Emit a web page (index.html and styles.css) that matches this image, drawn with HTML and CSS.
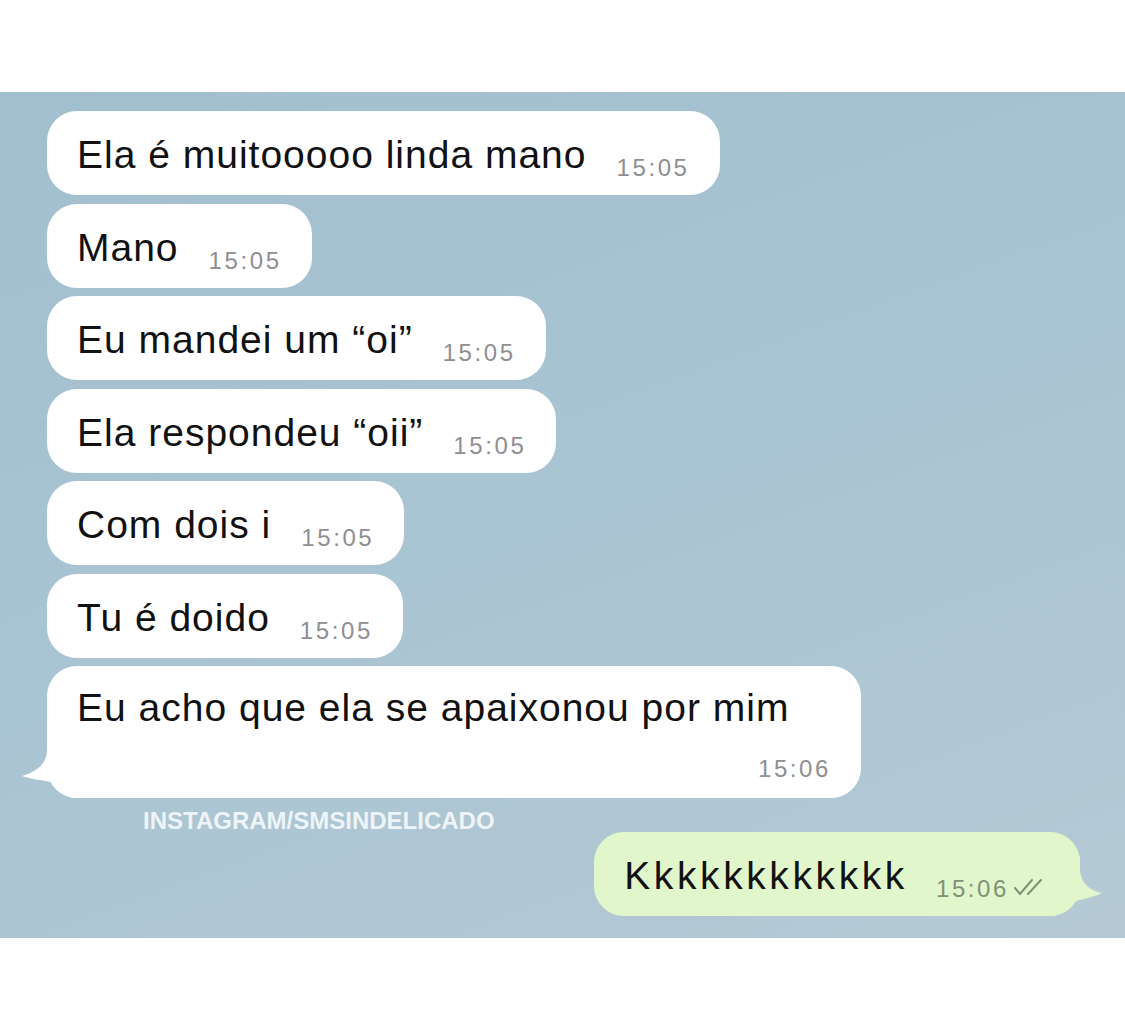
FILE: index.html
```html
<!DOCTYPE html>
<html lang="pt-BR">
<head>
    <meta charset="UTF-8">
    <title>Conversa</title>
    <link rel="stylesheet" href="styles.css">
</head>
<body>
<div class="chat">
    <div class="msg in"><span class="text">Ela é muitooooo linda mano</span><span class="time">15:05</span></div>
    <div class="msg in"><span class="text">Mano</span><span class="time">15:05</span></div>
    <div class="msg in"><span class="text">Eu mandei um “oi”</span><span class="time">15:05</span></div>
    <div class="msg in"><span class="text">Ela respondeu “oii”</span><span class="time">15:05</span></div>
    <div class="msg in"><span class="text">Com dois i</span><span class="time">15:05</span></div>
    <div class="msg in"><span class="text">Tu é doido</span><span class="time">15:05</span></div>

    <!-- ultima mensagem com o rabinho -->
    <div class="msg in tall">
        <span class="text">Eu acho que ela se apaixonou por mim</span>
        <span class="time">15:06</span>
        <svg class="tail tail-left" width="60" height="60" viewBox="0 0 60 60">
            <path d="M27 0 L27 12 C27 26 16 34 2 38 C12 42 26 42 34 45 C40 48 45 54 52 60 L60 60 L60 0 Z" fill="#fff"/>
        </svg>
    </div>

    <div class="watermark">INSTAGRAM/SMSINDELICADO</div>

    <div class="msg out">
        <span class="text">Kkkkkkkkkkkk</span>
        <span class="time">15:06</span>
        <svg class="ticks" width="34" height="18" viewBox="0 0 34 18">
            <path d="M2 10 L7 16 L19 2" fill="none" stroke="#7d8f77" stroke-width="2" stroke-linecap="round"/>
            <path d="M15 16 L28 2" fill="none" stroke="#7d8f77" stroke-width="2" stroke-linecap="round"/>
        </svg>
        <svg class="tail tail-right" width="60" height="60" viewBox="0 0 60 60">
            <path d="M36 0 L36 12 C36 26 44 34 58 37 C48 42 36 43 30 46 C24 49 18 54 10 60 L0 60 L0 0 Z" fill="#e1f7cb"/>
        </svg>
    </div>
</div>
</body>
</html>
```

FILE: styles.css
```css
body {
    margin: 0;
    background: #fff;
    font-family: 'Liberation Sans', Arial, sans-serif;
}

.chat {
    margin-top: 92px;
    height: 846px;
    box-sizing: border-box;
    padding: 19px 45px 0 47px;
    background: linear-gradient(160deg, #a2bfcf 0%, #a9c4d2 50%, #b5cad5 100%);
    display: flex;
    flex-direction: column;
    align-items: flex-start;
    gap: 8.5px;
}

.msg {
    position: relative;
    display: flex;
    align-items: flex-end;
    height: 84px;
    box-sizing: border-box;
    padding: 0 30px;
    background: #fff;
    border-radius: 30px;
}

.text {
    position: relative;
    z-index: 1;
    font-size: 39px;
    line-height: 40px;
    letter-spacing: 1px;
    color: #111;
    padding-bottom: 20px;
}

.time {
    position: relative;
    z-index: 1;
    font-size: 24px;
    line-height: 28px;
    letter-spacing: 2.6px;
    color: #8e8e93;
    margin-left: 30px;
    padding-bottom: 13px;
}

.msg.tall {
    height: 132px;
    width: 814px;
    flex-wrap: wrap;
    align-content: flex-start;
    padding-top: 22px;
}

.msg.tall .text {
    width: 100%;
    padding-bottom: 0;
}

.msg.tall .time {
    margin: 27px 0 0 auto;
}

.tail {
    position: absolute;
    bottom: 0;
}

.tail-left {
    left: -27px;
}

.watermark {
    margin: 5px 0 0 96px;
    font-size: 24px;
    font-weight: bold;
    color: #eef4f7;
    line-height: 18px;
}

.msg.out {
    align-self: flex-end;
    margin-top: -6px;
    padding-left: 30px;
    padding-right: 33px;
    background: #e1f7cb;
}

.msg.out .text {
    letter-spacing: 3.6px;
}

.msg.out .time {
    color: #7f917a;
    margin-left: 28px;
}

.ticks {
    position: relative;
    z-index: 1;
    margin: 0 0 20px 4px;
}

.tail-right {
    right: -24px;
}
```
